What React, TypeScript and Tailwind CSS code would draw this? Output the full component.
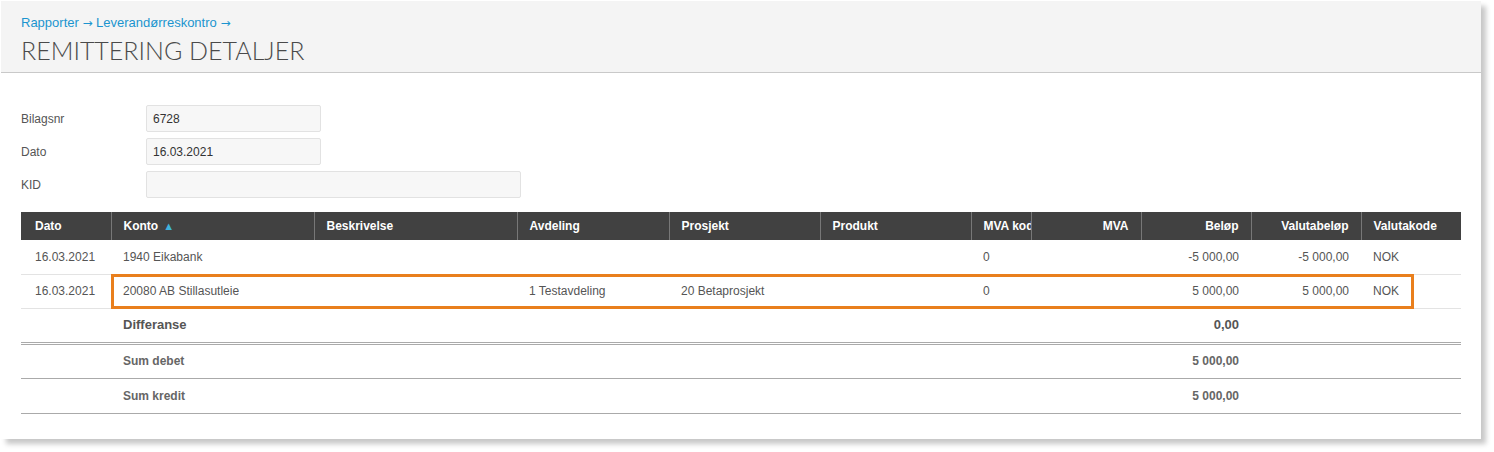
const columns = [
  { label: "Dato", width: "w-[90px]", align: "left" },
  { label: "Konto", width: "w-[203px]", align: "left", sorted: true },
  { label: "Beskrivelse", width: "w-[203px]", align: "left" },
  { label: "Avdeling", width: "w-[152px]", align: "left" },
  { label: "Prosjekt", width: "w-[151px]", align: "left" },
  { label: "Produkt", width: "w-[151px]", align: "left" },
  { label: "MVA kode", width: "w-[60px]", align: "left" },
  { label: "MVA", width: "w-[110px]", align: "right" },
  { label: "Beløp", width: "w-[110px]", align: "right" },
  { label: "Valutabeløp", width: "w-[110px]", align: "right" },
  { label: "Valutakode", width: "w-[100px]", align: "left" },
]

const rows = [
  { dato: "16.03.2021", konto: "1940 Eikabank", avdeling: "", prosjekt: "", mvaKode: "0", belop: "-5 000,00", valuta: "-5 000,00", kode: "NOK" },
  { dato: "16.03.2021", konto: "20080 AB Stillasutleie", avdeling: "1 Testavdeling", prosjekt: "20 Betaprosjekt", mvaKode: "0", belop: "5 000,00", valuta: "5 000,00", kode: "NOK", marked: true },
]

function Field({ label, value, wide }: { label: string; value: string; wide?: boolean }) {
  return (
    <div className="flex items-center">
      <label className="w-[125px] text-[12px] text-[#555]">{label}</label>
      <div className={`${wide ? "w-[375px]" : "w-[175px]"} h-[27px] flex items-center px-[6px] bg-[#f7f7f7] border border-[#e2e2e2] rounded-[2px] text-[12px] text-[#333]`}>
        {value}
      </div>
    </div>
  )
}

export default function App() {
  const td = "h-[34px] px-3 text-[12px] text-[#555] whitespace-nowrap"
  return (
    <div className="w-[1494px] h-[452px] bg-white pl-px pt-px" style={{ fontFamily: '"Liberation Sans", Arial, sans-serif' }}>
      <div className="w-[1480px] h-[438px] bg-white shadow-[5px_5px_5px_rgba(0,0,0,0.22)]">
        {/* page header */}
        <div className="h-[72px] bg-[#f4f4f4] border-b border-[#c9c9c9] px-5 pt-[14px]">
          <div className="text-[13px] text-[#1b94cf] leading-[16px]">
            Rapporter <span className="font-['DejaVu_Sans'] text-[12px]">→</span> Leverandørreskontro <span className="font-['DejaVu_Sans'] text-[12px]">→</span>
          </div>
          <h1 className="mt-[4px] text-[25px] leading-[30px] font-light text-[#4a4a4a]" style={{ fontFamily: "Lato, sans-serif" }}>
            REMITTERING DETALJER
          </h1>
        </div>

        <div className="px-5 pt-8">
          {/* document fields */}
          <div className="flex flex-col gap-[6px]">
            <Field label="Bilagsnr" value="6728" />
            <Field label="Dato" value="16.03.2021" />
            <Field label="KID" value="" wide />
          </div>

          <table className="mt-[14px] w-[1440px] table-fixed border-collapse">
            <colgroup>
              {columns.map((c) => (
                <col key={c.label} className={c.width} />
              ))}
            </colgroup>
            <thead>
              <tr className="bg-[#414141]">
                {columns.map((c, i) => (
                  <th
                    key={c.label}
                    className={`h-[28px] ${i === 0 ? "pl-[14px] pr-3" : "px-3"} text-[12px] font-bold text-white whitespace-nowrap overflow-hidden ${c.align === "right" ? "text-right" : "text-left"} ${i > 0 ? "border-l border-[#777]" : ""}`}
                  >
                    {c.label}
                    {c.sorted && <span className="ml-[5px] text-[11px] text-[#3fb3dc]">▲</span>}
                  </th>
                ))}
              </tr>
            </thead>
            <tbody>
              {rows.map((r, i) => (
                <tr key={i} className="border-b border-[#e3e3e3]">
                  <td className={`${td} pl-[14px]`}>{r.dato}</td>
                  <td className={`${td} relative`}>
                    {r.konto}
                    {r.marked && <div className="absolute left-0 -top-px w-[1303px] h-[35px] border-[3px] border-[#e97f1d] pointer-events-none" />}
                  </td>
                  <td className={td}></td>
                  <td className={td}>{r.avdeling}</td>
                  <td className={td}>{r.prosjekt}</td>
                  <td className={td}></td>
                  <td className={td}>{r.mvaKode}</td>
                  <td className={td}></td>
                  <td className={`${td} text-right`}>{r.belop}</td>
                  <td className={`${td} text-right`}>{r.valuta}</td>
                  <td className={td}>{r.kode}</td>
                </tr>
              ))}
              <tr className="border-b-[3px] border-double border-[#aaa]">
                <td className="h-[35px]"></td>
                <td colSpan={7} className="px-3 text-[13px] font-bold text-[#555]">Differanse</td>
                <td className="px-3 text-right text-[13px] font-bold text-[#555]">0,00</td>
                <td colSpan={2}></td>
              </tr>
              {["Sum debet", "Sum kredit"].map((label) => (
                <tr key={label} className="border-b border-[#aaa]">
                  <td className="h-[35px]"></td>
                  <td colSpan={7} className="px-3 text-[12px] font-bold text-[#666]">{label}</td>
                  <td className="px-3 text-right text-[12px] font-bold text-[#666]">5 000,00</td>
                  <td colSpan={2}></td>
                </tr>
              ))}
            </tbody>
          </table>
        </div>
      </div>
    </div>
  )
}
